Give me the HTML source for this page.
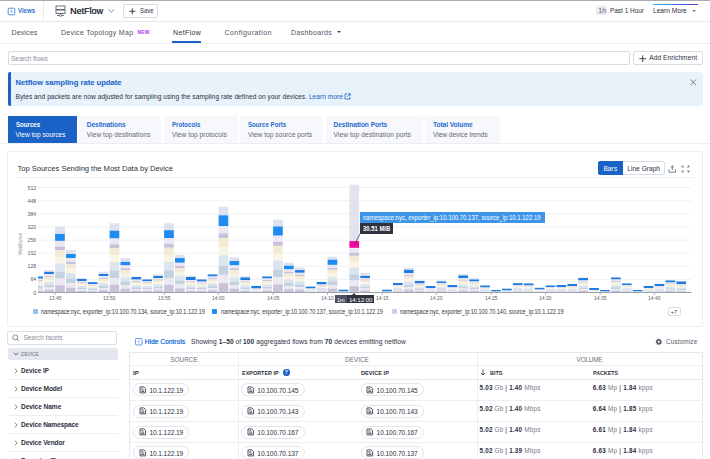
<!DOCTYPE html>
<html><head><meta charset="utf-8">
<style>
*{box-sizing:border-box;margin:0;padding:0}
html,body{width:710px;height:459px;overflow:hidden;background:#fff}
body{position:relative;font-family:"Liberation Sans",sans-serif;color:#2c3140}
.a{position:absolute;white-space:nowrap}
.hl{position:absolute;height:1px}
.vl{position:absolute;width:1px}
.t7{font-size:7px;line-height:9px}
.blue{color:#1a62c6}
.b{font-weight:bold}
.tab{position:absolute;top:116px;height:26.8px;background:#f7f8fb}
.tab .h{position:absolute;left:8px;top:5.2px;font-size:6.6px;font-weight:bold;color:#1f6bd0;white-space:nowrap}
.tab .s{position:absolute;left:8px;top:15.2px;font-size:6.6px;color:#626775;white-space:nowrap}
.pill{position:absolute;height:13px;border:1px solid #e2e5ec;border-radius:7px;background:#fff}
.pill svg{position:absolute;left:4.5px;top:1.5px}
.pill span{position:absolute;left:15px;top:2.4px;font-size:6.6px;line-height:8px;color:#2c3140;white-space:nowrap}
.fac{position:absolute;left:21px;font-size:6.6px;font-weight:bold;color:#2c3140;white-space:nowrap}
.chev{position:absolute;left:13.5px;width:4px;height:6px}
.vol{position:absolute;font-size:6.3px;color:#2c3140;white-space:nowrap}
.vol b{font-weight:bold}
.vol em{font-style:normal;color:#737885}
.ax{position:absolute;font-size:5.6px;color:#5b606d;white-space:nowrap}
</style></head><body>
<!-- top line -->
<div class="hl" style="left:0;top:0;width:710px;height:1px;background:#a9abb1"></div>
<!-- header -->
<svg class="a" style="left:7px;top:6.5px" width="9" height="9"><rect x="1.2" y="1.2" width="6.6" height="6.6" rx="1" fill="none" stroke="#3d82d8" stroke-width="0.9"></rect><path d="M3.7 2.9L5.2 4.5L3.7 6.1" fill="none" stroke="#3d82d8" stroke-width="0.9"></path></svg>
<div class="a t7" style="left: 18px; top: 6px; color: rgb(42, 111, 208); font-weight: bold; transform: scaleX(0.8621); transform-origin: 0px 50%;">Views</div>
<div class="vl" style="left:43px;top:1px;height:20px;background:#e8eaf0"></div>
<!-- server icon -->
<svg class="a" style="left:55px;top:5px" width="12" height="12" viewBox="0 0 12 12"><rect x="1" y="1" width="9" height="3.5" fill="none" stroke="#5a5f6c" stroke-width="0.9"></rect><rect x="1" y="5" width="9" height="3.5" fill="none" stroke="#5a5f6c" stroke-width="0.9"></rect><line x1="5.5" y1="8.5" x2="5.5" y2="10.5" stroke="#5a5f6c" stroke-width="0.9"></line><line x1="2" y1="10.5" x2="9" y2="10.5" stroke="#5a5f6c" stroke-width="0.9"></line><circle cx="5.5" cy="10.5" r="1" fill="#fff" stroke="#5a5f6c" stroke-width="0.8"></circle></svg>
<div class="a" style="left: 70px; top: 5px; font-size: 9.6px; line-height: 12px; color: rgb(44, 49, 64); text-shadow: rgb(44, 49, 64) 0.15px 0px 0px; transform: scaleX(0.9378); transform-origin: 0px 50%;">NetFlow</div>
<svg class="a" style="left:107.8px;top:9.3px" width="7" height="4"><path d="M0.6 0.6L3.3 3.2L6 0.6" fill="none" stroke="#6a6f7c" stroke-width="0.8"></path></svg>
<div class="a" style="left:123.2px;top:4px;width:35px;height:13.5px;border:1px solid #d8dbe5;border-radius:2px"></div>
<svg class="a" style="left:129px;top:7.5px" width="7" height="7"><path d="M3.3 0.3V6.3M0.3 3.3H6.3" stroke="#2c3140" stroke-width="0.9"></path></svg>
<div class="a" style="left: 139.7px; top: 6px; font-size: 6.8px; line-height: 9px; color: rgb(44, 49, 64); transform: scaleX(0.871); transform-origin: 0px 50%;">Save</div>
<div class="a" style="left:596px;top:6px;width:11px;height:9px;background:#e9ebf1;border-radius:2px"></div>
<div class="a t7" style="left:598.3px;top:6px;color:#5d6270">1h</div>
<div class="a t7" style="left: 610px; top: 6.3px; color: rgb(44, 49, 64); transform: scaleX(0.9197); transform-origin: 0px 50%;">Past 1 Hour</div>
<div class="a" style="left:653px;top:3.7px;width:45.2px;height:1.4px;background:linear-gradient(90deg,#33b6e6,#4c3bd6)"></div>
<div class="a t7" style="left: 653.4px; top: 6.4px; color: rgb(44, 49, 64); transform: scaleX(0.9442); transform-origin: 0px 50%;">Learn More</div>
<div class="a" style="left:691.8px;top:9.6px;width:0;height:0;border-left:2px solid transparent;border-right:2px solid transparent;border-top:2.8px solid #7d828e"></div>
<div class="hl" style="left:0;top:21px;width:710px;background:#e8eaf0"></div>
<!-- nav tabs -->
<div class="a t7" style="left: 11.5px; top: 27.5px; color: rgb(76, 82, 96); letter-spacing: 0.132px;">Devices</div>
<div class="a t7" style="left: 60.9px; top: 27.5px; color: rgb(76, 82, 96); letter-spacing: 0.299px;">Device Topology Map</div>
<div class="a" style="left: 137.5px; top: 29px; font-size: 5px; line-height: 6px; font-weight: bold; color: rgb(169, 60, 242); letter-spacing: 0.114px;">NEW</div>
<div class="a t7" style="left: 173px; top: 27.5px; color: rgb(44, 49, 64); letter-spacing: 0.369px;">NetFlow</div>
<div class="a" style="left:172px;top:41px;width:29px;height:1.5px;background:#1a62c6"></div>
<div class="a t7" style="left: 224.5px; top: 27.5px; color: rgb(76, 82, 96); letter-spacing: 0.438px;">Configuration</div>
<div class="a t7" style="left: 291px; top: 27.5px; color: rgb(76, 82, 96); letter-spacing: 0.339px;">Dashboards</div>
<div class="a" style="left:336.8px;top:31px;width:0;height:0;border-left:2.7px solid transparent;border-right:2.7px solid transparent;border-top:2.8px solid #3d4250"></div>
<div class="hl" style="left:0;top:42.5px;width:710px;background:#eceef3"></div>
<!-- search -->
<div class="a" style="left:7.5px;top:51px;width:622px;height:13.5px;border:1px solid #d8dbe8;border-radius:2px"></div>
<div class="a" style="left: 11px; top: 53.5px; font-size: 6.6px; line-height: 9px; color: rgb(141, 145, 156); letter-spacing: -0.086px;">Search flows</div>
<div class="a" style="left:633px;top:51px;width:69.5px;height:13.5px;border:1px solid #d8dbe8;border-radius:2px"></div>
<svg class="a" style="left:638.5px;top:54.5px" width="8" height="8"><path d="M3.7 0.3V7M0.3 3.7H7" stroke="#2c3140" stroke-width="0.9"></path></svg>
<div class="a" style="left: 649.2px; top: 52.8px; font-size: 6.6px; line-height: 9px; color: rgb(44, 49, 64); letter-spacing: 0.068px;">Add Enrichment</div>
<!-- banner -->
<div class="a" style="left:7.5px;top:72px;width:695px;height:34px;background:#e8f2fb;border-left:3px solid #1a62c6;border-radius:2px"></div>
<div class="a b" style="left: 15.5px; top: 77.5px; font-size: 7.7px; line-height: 10px; color: rgb(26, 98, 198); letter-spacing: -0.045px;">Netflow sampling rate update</div>
<div class="a" style="left: 15.5px; top: 92px; font-size: 6.6px; line-height: 9px; color: rgb(44, 49, 64); letter-spacing: 0.047px;">Bytes and packets are now adjusted for sampling using the sampling rate defined on your devices. <span style="color:#1a62c6">Learn more</span></div>
<svg class="a" style="left:344px;top:93.3px" width="7" height="7"><path d="M3.2 1H1V6H6V3.8M4 0.8H6.2V3M6.2 0.8L3.3 3.7" fill="none" stroke="#1a62c6" stroke-width="0.8"></path></svg>
<svg class="a" style="left:689.5px;top:79px" width="7" height="7"><path d="M0.5 0.5L6 6M6 0.5L0.5 6" stroke="#5d6270" stroke-width="0.8"></path></svg>
<!-- tabs -->
<div class="tab" style="left:7.5px;width:69.5px;background:#1a62c6"><div class="h" style="color: rgb(255, 255, 255); transform: scaleX(0.9258); transform-origin: 0px 50%;">Sources</div><div class="s" style="color: rgb(255, 255, 255); letter-spacing: -0.006px;">View top sources</div></div>
<div class="tab" style="left:78.8px;width:82.5px"><div class="h" style="letter-spacing: -0.071px;">Destinations</div><div class="s" style="letter-spacing: 0.06px;">View top destinations</div></div>
<div class="tab" style="left:164px;width:74px"><div class="h" style="transform: scaleX(0.9335); transform-origin: 0px 50%;">Protocols</div><div class="s" style="letter-spacing: 0.055px;">View top protocols</div></div>
<div class="tab" style="left:240px;width:83px"><div class="h" style="transform: scaleX(0.9331); transform-origin: 0px 50%;">Source Ports</div><div class="s" style="letter-spacing: 0.04px;">View top source ports</div></div>
<div class="tab" style="left:325.5px;width:97px"><div class="h" style="letter-spacing: -0.05px;">Destination Ports</div><div class="s" style="letter-spacing: 0.08px;">View top destination ports</div></div>
<div class="tab" style="left:425px;width:74.5px"><div class="h" style="letter-spacing: -0.057px;">Total Volume</div><div class="s" style="letter-spacing: -0.043px;">View device trends</div></div>
<div class="hl" style="left:0;top:143px;width:710px;background:#eceef3"></div>
<!-- chart panel -->
<div class="a" style="left:7px;top:151px;width:695.5px;height:175.5px;border:1px solid #eceef3;border-radius:2px"></div>
<div class="a" style="left: 17.5px; top: 164px; font-size: 7.6px; line-height: 10px; color: rgb(44, 49, 64); letter-spacing: -0.036px;">Top Sources Sending the Most Data by Device</div>
<div class="a" style="left:598px;top:161px;width:67px;height:14px;border:1px solid #d8dbe8;border-radius:2px"></div>
<div class="a" style="left:598px;top:161px;width:24.5px;height:14px;background:#1a62c6;border-radius:2px 0 0 2px"></div>
<div class="a" style="left: 603.4px; top: 163.6px; font-size: 6.6px; line-height: 9px; color: rgb(255, 255, 255); letter-spacing: 0.079px;">Bars</div>
<div class="a" style="left: 627.3px; top: 163.6px; font-size: 6.6px; line-height: 9px; color: rgb(44, 49, 64); letter-spacing: 0.008px;">Line Graph</div>
<svg class="a" style="left:667.5px;top:164.5px" width="9" height="8"><path d="M1 4.5V7.2H7.5V4.5M4.25 0.8V5.2M2.6 2.4L4.25 0.8L5.9 2.4" fill="none" stroke="#5d6270" stroke-width="0.8"></path></svg>
<svg class="a" style="left:681px;top:164.5px" width="9" height="8"><path d="M1 2.5V1H2.5M1 1L2.6 2.6M6.5 1H8V2.5M8 1L6.4 2.6M8 5.5V7H6.5M8 7L6.4 5.4M2.5 7H1V5.5M1 7L2.6 5.4" fill="none" stroke="#5d6270" stroke-width="0.8"></path></svg>
<div class="hl" style="left:17px;top:177px;width:677px;background:#eceef3"></div>
<svg class="a" style="left:0;top:0" width="710" height="459" viewBox="0 0 710 459">
<rect x="38.0" y="278.89" width="653.5" height="1" fill="#f0f1f5"></rect>
<rect x="38.0" y="265.78" width="653.5" height="1" fill="#f0f1f5"></rect>
<rect x="38.0" y="252.67" width="653.5" height="1" fill="#f0f1f5"></rect>
<rect x="38.0" y="239.56" width="653.5" height="1" fill="#f0f1f5"></rect>
<rect x="38.0" y="226.45" width="653.5" height="1" fill="#f0f1f5"></rect>
<rect x="38.0" y="213.34" width="653.5" height="1" fill="#f0f1f5"></rect>
<rect x="38.0" y="200.23" width="653.5" height="1" fill="#f0f1f5"></rect>
<rect x="38.0" y="187.12" width="653.5" height="1" fill="#f0f1f5"></rect>
<rect x="38.00" y="275.40" width="5.00" height="1.20" fill="#dce3ee"></rect>
<rect x="38.00" y="276.60" width="5.00" height="2.10" fill="#1f7ae4"></rect>
<rect x="38.00" y="278.70" width="5.00" height="1.49" fill="#ebe7f3"></rect>
<rect x="38.00" y="280.19" width="5.00" height="0.96" fill="#c7c1da"></rect>
<rect x="38.00" y="281.15" width="5.00" height="1.84" fill="#f3ebd3"></rect>
<rect x="38.00" y="282.99" width="5.00" height="1.71" fill="#f8f5e4"></rect>
<rect x="38.00" y="284.70" width="5.00" height="2.14" fill="#dce4ee"></rect>
<rect x="38.00" y="286.84" width="5.00" height="1.92" fill="#c3d2e0"></rect>
<rect x="38.00" y="288.76" width="5.00" height="1.73" fill="#ece8f2"></rect>
<rect x="38.00" y="290.48" width="5.00" height="1.92" fill="#c9c3d9"></rect>
<rect x="44.20" y="270.00" width="9.70" height="1.90" fill="#dce3ee"></rect>
<rect x="44.20" y="271.90" width="9.70" height="2.30" fill="#1f7ae4"></rect>
<rect x="44.20" y="274.20" width="9.70" height="1.98" fill="#ebe7f3"></rect>
<rect x="44.20" y="276.18" width="9.70" height="1.27" fill="#c7c1da"></rect>
<rect x="44.20" y="277.46" width="9.70" height="2.44" fill="#f3ebd3"></rect>
<rect x="44.20" y="279.90" width="9.70" height="2.27" fill="#f8f5e4"></rect>
<rect x="44.20" y="282.17" width="9.70" height="2.84" fill="#dce4ee"></rect>
<rect x="44.20" y="285.01" width="9.70" height="2.55" fill="#c3d2e0"></rect>
<rect x="44.20" y="287.56" width="9.70" height="2.29" fill="#ece8f2"></rect>
<rect x="44.20" y="289.85" width="9.70" height="2.55" fill="#c9c3d9"></rect>
<rect x="55.10" y="226.60" width="9.70" height="7.30" fill="#dce3ee"></rect>
<rect x="55.10" y="233.90" width="9.70" height="7.00" fill="#1f8af0"></rect>
<rect x="55.10" y="240.90" width="9.70" height="5.61" fill="#ebe7f3"></rect>
<rect x="55.10" y="246.51" width="9.70" height="3.60" fill="#c7c1da"></rect>
<rect x="55.10" y="250.12" width="9.70" height="6.90" fill="#f3ebd3"></rect>
<rect x="55.10" y="257.02" width="9.70" height="6.44" fill="#f8f5e4"></rect>
<rect x="55.10" y="263.46" width="9.70" height="8.03" fill="#dce4ee"></rect>
<rect x="55.10" y="271.49" width="9.70" height="7.21" fill="#c3d2e0"></rect>
<rect x="55.10" y="278.70" width="9.70" height="6.49" fill="#ece8f2"></rect>
<rect x="55.10" y="285.19" width="9.70" height="7.21" fill="#c9c3d9"></rect>
<rect x="66.00" y="250.00" width="9.70" height="4.00" fill="#dce3ee"></rect>
<rect x="66.00" y="254.00" width="9.70" height="4.00" fill="#1f8af0"></rect>
<rect x="66.00" y="258.00" width="9.70" height="3.75" fill="#ebe7f3"></rect>
<rect x="66.00" y="261.75" width="9.70" height="2.41" fill="#c7c1da"></rect>
<rect x="66.00" y="264.16" width="9.70" height="4.61" fill="#f3ebd3"></rect>
<rect x="66.00" y="268.77" width="9.70" height="4.30" fill="#f8f5e4"></rect>
<rect x="66.00" y="273.07" width="9.70" height="5.37" fill="#dce4ee"></rect>
<rect x="66.00" y="278.43" width="9.70" height="4.82" fill="#c3d2e0"></rect>
<rect x="66.00" y="283.25" width="9.70" height="4.33" fill="#ece8f2"></rect>
<rect x="66.00" y="287.58" width="9.70" height="4.82" fill="#c9c3d9"></rect>
<rect x="76.90" y="278.40" width="9.70" height="0.50" fill="#dce3ee"></rect>
<rect x="76.90" y="278.90" width="9.70" height="2.10" fill="#1f7ae4"></rect>
<rect x="76.90" y="281.00" width="9.70" height="1.24" fill="#ebe7f3"></rect>
<rect x="76.90" y="282.24" width="9.70" height="0.80" fill="#c7c1da"></rect>
<rect x="76.90" y="283.04" width="9.70" height="1.53" fill="#f3ebd3"></rect>
<rect x="76.90" y="284.57" width="9.70" height="1.43" fill="#f8f5e4"></rect>
<rect x="76.90" y="285.99" width="9.70" height="1.78" fill="#dce4ee"></rect>
<rect x="76.90" y="287.77" width="9.70" height="1.60" fill="#c3d2e0"></rect>
<rect x="76.90" y="289.37" width="9.70" height="1.44" fill="#ece8f2"></rect>
<rect x="76.90" y="290.80" width="9.70" height="1.60" fill="#c9c3d9"></rect>
<rect x="87.80" y="281.80" width="9.70" height="0.40" fill="#dce3ee"></rect>
<rect x="87.80" y="282.20" width="9.70" height="1.90" fill="#1f7ae4"></rect>
<rect x="87.80" y="284.10" width="9.70" height="0.90" fill="#ebe7f3"></rect>
<rect x="87.80" y="285.00" width="9.70" height="0.58" fill="#c7c1da"></rect>
<rect x="87.80" y="285.59" width="9.70" height="1.11" fill="#f3ebd3"></rect>
<rect x="87.80" y="286.70" width="9.70" height="1.04" fill="#f8f5e4"></rect>
<rect x="87.80" y="287.74" width="9.70" height="1.29" fill="#dce4ee"></rect>
<rect x="87.80" y="289.03" width="9.70" height="1.16" fill="#c3d2e0"></rect>
<rect x="87.80" y="290.19" width="9.70" height="1.05" fill="#ece8f2"></rect>
<rect x="87.80" y="291.24" width="9.70" height="1.16" fill="#c9c3d9"></rect>
<rect x="98.70" y="271.70" width="9.70" height="2.30" fill="#dce3ee"></rect>
<rect x="98.70" y="274.00" width="9.70" height="2.00" fill="#1f7ae4"></rect>
<rect x="98.70" y="276.00" width="9.70" height="1.79" fill="#ebe7f3"></rect>
<rect x="98.70" y="277.79" width="9.70" height="1.15" fill="#c7c1da"></rect>
<rect x="98.70" y="278.94" width="9.70" height="2.20" fill="#f3ebd3"></rect>
<rect x="98.70" y="281.13" width="9.70" height="2.05" fill="#f8f5e4"></rect>
<rect x="98.70" y="283.18" width="9.70" height="2.56" fill="#dce4ee"></rect>
<rect x="98.70" y="285.74" width="9.70" height="2.30" fill="#c3d2e0"></rect>
<rect x="98.70" y="288.04" width="9.70" height="2.07" fill="#ece8f2"></rect>
<rect x="98.70" y="290.10" width="9.70" height="2.30" fill="#c9c3d9"></rect>
<rect x="109.60" y="223.30" width="9.70" height="7.40" fill="#dce3ee"></rect>
<rect x="109.60" y="230.70" width="9.70" height="7.80" fill="#1f8af0"></rect>
<rect x="109.60" y="238.50" width="9.70" height="5.88" fill="#ebe7f3"></rect>
<rect x="109.60" y="244.38" width="9.70" height="3.77" fill="#c7c1da"></rect>
<rect x="109.60" y="248.15" width="9.70" height="7.22" fill="#f3ebd3"></rect>
<rect x="109.60" y="255.37" width="9.70" height="6.74" fill="#f8f5e4"></rect>
<rect x="109.60" y="262.11" width="9.70" height="8.41" fill="#dce4ee"></rect>
<rect x="109.60" y="270.52" width="9.70" height="7.55" fill="#c3d2e0"></rect>
<rect x="109.60" y="278.06" width="9.70" height="6.79" fill="#ece8f2"></rect>
<rect x="109.60" y="284.85" width="9.70" height="7.55" fill="#c9c3d9"></rect>
<rect x="120.50" y="258.10" width="9.70" height="3.80" fill="#dce3ee"></rect>
<rect x="120.50" y="261.90" width="9.70" height="3.50" fill="#1f8af0"></rect>
<rect x="120.50" y="265.40" width="9.70" height="2.94" fill="#ebe7f3"></rect>
<rect x="120.50" y="268.34" width="9.70" height="1.89" fill="#c7c1da"></rect>
<rect x="120.50" y="270.23" width="9.70" height="3.62" fill="#f3ebd3"></rect>
<rect x="120.50" y="273.85" width="9.70" height="3.38" fill="#f8f5e4"></rect>
<rect x="120.50" y="277.23" width="9.70" height="4.21" fill="#dce4ee"></rect>
<rect x="120.50" y="281.44" width="9.70" height="3.78" fill="#c3d2e0"></rect>
<rect x="120.50" y="285.22" width="9.70" height="3.40" fill="#ece8f2"></rect>
<rect x="120.50" y="288.62" width="9.70" height="3.78" fill="#c9c3d9"></rect>
<rect x="131.40" y="276.70" width="9.70" height="0.30" fill="#dce3ee"></rect>
<rect x="131.40" y="277.00" width="9.70" height="2.60" fill="#1f7ae4"></rect>
<rect x="131.40" y="279.60" width="9.70" height="1.40" fill="#ebe7f3"></rect>
<rect x="131.40" y="281.00" width="9.70" height="0.90" fill="#c7c1da"></rect>
<rect x="131.40" y="281.89" width="9.70" height="1.72" fill="#f3ebd3"></rect>
<rect x="131.40" y="283.61" width="9.70" height="1.60" fill="#f8f5e4"></rect>
<rect x="131.40" y="285.21" width="9.70" height="2.00" fill="#dce4ee"></rect>
<rect x="131.40" y="287.20" width="9.70" height="1.79" fill="#c3d2e0"></rect>
<rect x="131.40" y="289.00" width="9.70" height="1.61" fill="#ece8f2"></rect>
<rect x="131.40" y="290.61" width="9.70" height="1.79" fill="#c9c3d9"></rect>
<rect x="142.30" y="278.90" width="9.70" height="0.60" fill="#dce3ee"></rect>
<rect x="142.30" y="279.50" width="9.70" height="1.80" fill="#1f7ae4"></rect>
<rect x="142.30" y="281.30" width="9.70" height="1.21" fill="#ebe7f3"></rect>
<rect x="142.30" y="282.51" width="9.70" height="0.78" fill="#c7c1da"></rect>
<rect x="142.30" y="283.29" width="9.70" height="1.49" fill="#f3ebd3"></rect>
<rect x="142.30" y="284.77" width="9.70" height="1.39" fill="#f8f5e4"></rect>
<rect x="142.30" y="286.16" width="9.70" height="1.73" fill="#dce4ee"></rect>
<rect x="142.30" y="287.89" width="9.70" height="1.55" fill="#c3d2e0"></rect>
<rect x="142.30" y="289.45" width="9.70" height="1.40" fill="#ece8f2"></rect>
<rect x="142.30" y="290.85" width="9.70" height="1.55" fill="#c9c3d9"></rect>
<rect x="153.20" y="274.30" width="9.70" height="1.70" fill="#dce3ee"></rect>
<rect x="153.20" y="276.00" width="9.70" height="2.00" fill="#1f7ae4"></rect>
<rect x="153.20" y="278.00" width="9.70" height="1.57" fill="#ebe7f3"></rect>
<rect x="153.20" y="279.57" width="9.70" height="1.01" fill="#c7c1da"></rect>
<rect x="153.20" y="280.58" width="9.70" height="1.93" fill="#f3ebd3"></rect>
<rect x="153.20" y="282.51" width="9.70" height="1.80" fill="#f8f5e4"></rect>
<rect x="153.20" y="284.31" width="9.70" height="2.25" fill="#dce4ee"></rect>
<rect x="153.20" y="286.55" width="9.70" height="2.02" fill="#c3d2e0"></rect>
<rect x="153.20" y="288.57" width="9.70" height="1.81" fill="#ece8f2"></rect>
<rect x="153.20" y="290.38" width="9.70" height="2.02" fill="#c9c3d9"></rect>
<rect x="164.10" y="223.30" width="9.70" height="6.90" fill="#dce3ee"></rect>
<rect x="164.10" y="230.20" width="9.70" height="7.80" fill="#1f8af0"></rect>
<rect x="164.10" y="238.00" width="9.70" height="5.93" fill="#ebe7f3"></rect>
<rect x="164.10" y="243.93" width="9.70" height="3.81" fill="#c7c1da"></rect>
<rect x="164.10" y="247.74" width="9.70" height="7.29" fill="#f3ebd3"></rect>
<rect x="164.10" y="255.03" width="9.70" height="6.80" fill="#f8f5e4"></rect>
<rect x="164.10" y="261.83" width="9.70" height="8.49" fill="#dce4ee"></rect>
<rect x="164.10" y="270.31" width="9.70" height="7.62" fill="#c3d2e0"></rect>
<rect x="164.10" y="277.93" width="9.70" height="6.85" fill="#ece8f2"></rect>
<rect x="164.10" y="284.78" width="9.70" height="7.62" fill="#c9c3d9"></rect>
<rect x="175.00" y="254.80" width="9.70" height="3.30" fill="#dce3ee"></rect>
<rect x="175.00" y="258.10" width="9.70" height="4.70" fill="#1f8af0"></rect>
<rect x="175.00" y="262.80" width="9.70" height="3.23" fill="#ebe7f3"></rect>
<rect x="175.00" y="266.03" width="9.70" height="2.07" fill="#c7c1da"></rect>
<rect x="175.00" y="268.10" width="9.70" height="3.97" fill="#f3ebd3"></rect>
<rect x="175.00" y="272.06" width="9.70" height="3.70" fill="#f8f5e4"></rect>
<rect x="175.00" y="275.76" width="9.70" height="4.62" fill="#dce4ee"></rect>
<rect x="175.00" y="280.38" width="9.70" height="4.14" fill="#c3d2e0"></rect>
<rect x="175.00" y="284.53" width="9.70" height="3.73" fill="#ece8f2"></rect>
<rect x="175.00" y="288.26" width="9.70" height="4.14" fill="#c9c3d9"></rect>
<rect x="185.90" y="275.70" width="9.70" height="1.30" fill="#dce3ee"></rect>
<rect x="185.90" y="277.00" width="9.70" height="3.00" fill="#1f7ae4"></rect>
<rect x="185.90" y="280.00" width="9.70" height="1.35" fill="#ebe7f3"></rect>
<rect x="185.90" y="281.35" width="9.70" height="0.87" fill="#c7c1da"></rect>
<rect x="185.90" y="282.22" width="9.70" height="1.66" fill="#f3ebd3"></rect>
<rect x="185.90" y="283.88" width="9.70" height="1.55" fill="#f8f5e4"></rect>
<rect x="185.90" y="285.43" width="9.70" height="1.93" fill="#dce4ee"></rect>
<rect x="185.90" y="287.37" width="9.70" height="1.74" fill="#c3d2e0"></rect>
<rect x="185.90" y="289.10" width="9.70" height="1.56" fill="#ece8f2"></rect>
<rect x="185.90" y="290.66" width="9.70" height="1.74" fill="#c9c3d9"></rect>
<rect x="196.80" y="279.40" width="9.70" height="0.10" fill="#dce3ee"></rect>
<rect x="196.80" y="279.50" width="9.70" height="2.10" fill="#1f7ae4"></rect>
<rect x="196.80" y="281.60" width="9.70" height="1.18" fill="#ebe7f3"></rect>
<rect x="196.80" y="282.78" width="9.70" height="0.76" fill="#c7c1da"></rect>
<rect x="196.80" y="283.53" width="9.70" height="1.45" fill="#f3ebd3"></rect>
<rect x="196.80" y="284.98" width="9.70" height="1.35" fill="#f8f5e4"></rect>
<rect x="196.80" y="286.33" width="9.70" height="1.68" fill="#dce4ee"></rect>
<rect x="196.80" y="288.02" width="9.70" height="1.51" fill="#c3d2e0"></rect>
<rect x="196.80" y="289.53" width="9.70" height="1.36" fill="#ece8f2"></rect>
<rect x="196.80" y="290.89" width="9.70" height="1.51" fill="#c9c3d9"></rect>
<rect x="207.70" y="273.90" width="9.70" height="0.60" fill="#dce3ee"></rect>
<rect x="207.70" y="274.50" width="9.70" height="2.00" fill="#1f7ae4"></rect>
<rect x="207.70" y="276.50" width="9.70" height="1.73" fill="#ebe7f3"></rect>
<rect x="207.70" y="278.23" width="9.70" height="1.11" fill="#c7c1da"></rect>
<rect x="207.70" y="279.35" width="9.70" height="2.13" fill="#f3ebd3"></rect>
<rect x="207.70" y="281.48" width="9.70" height="1.99" fill="#f8f5e4"></rect>
<rect x="207.70" y="283.46" width="9.70" height="2.48" fill="#dce4ee"></rect>
<rect x="207.70" y="285.94" width="9.70" height="2.23" fill="#c3d2e0"></rect>
<rect x="207.70" y="288.17" width="9.70" height="2.00" fill="#ece8f2"></rect>
<rect x="207.70" y="290.17" width="9.70" height="2.23" fill="#c9c3d9"></rect>
<rect x="218.60" y="206.70" width="9.70" height="8.60" fill="#dce3ee"></rect>
<rect x="218.60" y="215.30" width="9.70" height="10.90" fill="#1f8af0"></rect>
<rect x="218.60" y="226.20" width="9.70" height="7.22" fill="#ebe7f3"></rect>
<rect x="218.60" y="233.42" width="9.70" height="4.63" fill="#c7c1da"></rect>
<rect x="218.60" y="238.05" width="9.70" height="8.87" fill="#f3ebd3"></rect>
<rect x="218.60" y="246.92" width="9.70" height="8.28" fill="#f8f5e4"></rect>
<rect x="218.60" y="255.20" width="9.70" height="10.33" fill="#dce4ee"></rect>
<rect x="218.60" y="265.52" width="9.70" height="9.27" fill="#c3d2e0"></rect>
<rect x="218.60" y="274.79" width="9.70" height="8.34" fill="#ece8f2"></rect>
<rect x="218.60" y="283.13" width="9.70" height="9.27" fill="#c9c3d9"></rect>
<rect x="229.50" y="257.60" width="9.70" height="3.40" fill="#dce3ee"></rect>
<rect x="229.50" y="261.00" width="9.70" height="4.40" fill="#1f8af0"></rect>
<rect x="229.50" y="265.40" width="9.70" height="2.94" fill="#ebe7f3"></rect>
<rect x="229.50" y="268.34" width="9.70" height="1.89" fill="#c7c1da"></rect>
<rect x="229.50" y="270.23" width="9.70" height="3.62" fill="#f3ebd3"></rect>
<rect x="229.50" y="273.85" width="9.70" height="3.38" fill="#f8f5e4"></rect>
<rect x="229.50" y="277.23" width="9.70" height="4.21" fill="#dce4ee"></rect>
<rect x="229.50" y="281.44" width="9.70" height="3.78" fill="#c3d2e0"></rect>
<rect x="229.50" y="285.22" width="9.70" height="3.40" fill="#ece8f2"></rect>
<rect x="229.50" y="288.62" width="9.70" height="3.78" fill="#c9c3d9"></rect>
<rect x="240.40" y="276.20" width="9.70" height="1.30" fill="#dce3ee"></rect>
<rect x="240.40" y="277.50" width="9.70" height="2.50" fill="#1f7ae4"></rect>
<rect x="240.40" y="280.00" width="9.70" height="1.35" fill="#ebe7f3"></rect>
<rect x="240.40" y="281.35" width="9.70" height="0.87" fill="#c7c1da"></rect>
<rect x="240.40" y="282.22" width="9.70" height="1.66" fill="#f3ebd3"></rect>
<rect x="240.40" y="283.88" width="9.70" height="1.55" fill="#f8f5e4"></rect>
<rect x="240.40" y="285.43" width="9.70" height="1.93" fill="#dce4ee"></rect>
<rect x="240.40" y="287.37" width="9.70" height="1.74" fill="#c3d2e0"></rect>
<rect x="240.40" y="289.10" width="9.70" height="1.56" fill="#ece8f2"></rect>
<rect x="240.40" y="290.66" width="9.70" height="1.74" fill="#c9c3d9"></rect>
<rect x="251.30" y="285.80" width="9.70" height="0.20" fill="#dce3ee"></rect>
<rect x="251.30" y="286.00" width="9.70" height="2.50" fill="#1f7ae4"></rect>
<rect x="251.30" y="288.50" width="9.70" height="0.43" fill="#ebe7f3"></rect>
<rect x="251.30" y="288.93" width="9.70" height="0.27" fill="#c7c1da"></rect>
<rect x="251.30" y="289.20" width="9.70" height="0.52" fill="#f3ebd3"></rect>
<rect x="251.30" y="289.72" width="9.70" height="0.49" fill="#f8f5e4"></rect>
<rect x="251.30" y="290.21" width="9.70" height="0.61" fill="#dce4ee"></rect>
<rect x="251.30" y="290.82" width="9.70" height="0.55" fill="#c3d2e0"></rect>
<rect x="251.30" y="291.36" width="9.70" height="0.49" fill="#ece8f2"></rect>
<rect x="251.30" y="291.85" width="9.70" height="0.55" fill="#c9c3d9"></rect>
<rect x="262.20" y="276.20" width="9.70" height="0.30" fill="#dce3ee"></rect>
<rect x="262.20" y="276.50" width="9.70" height="2.00" fill="#1f7ae4"></rect>
<rect x="262.20" y="278.50" width="9.70" height="1.52" fill="#ebe7f3"></rect>
<rect x="262.20" y="280.02" width="9.70" height="0.97" fill="#c7c1da"></rect>
<rect x="262.20" y="280.99" width="9.70" height="1.86" fill="#f3ebd3"></rect>
<rect x="262.20" y="282.85" width="9.70" height="1.74" fill="#f8f5e4"></rect>
<rect x="262.20" y="284.59" width="9.70" height="2.17" fill="#dce4ee"></rect>
<rect x="262.20" y="286.76" width="9.70" height="1.95" fill="#c3d2e0"></rect>
<rect x="262.20" y="288.70" width="9.70" height="1.75" fill="#ece8f2"></rect>
<rect x="262.20" y="290.45" width="9.70" height="1.95" fill="#c9c3d9"></rect>
<rect x="273.10" y="219.70" width="9.70" height="6.80" fill="#dce3ee"></rect>
<rect x="273.10" y="226.50" width="9.70" height="9.20" fill="#1f8af0"></rect>
<rect x="273.10" y="235.70" width="9.70" height="6.18" fill="#ebe7f3"></rect>
<rect x="273.10" y="241.88" width="9.70" height="3.97" fill="#c7c1da"></rect>
<rect x="273.10" y="245.85" width="9.70" height="7.60" fill="#f3ebd3"></rect>
<rect x="273.10" y="253.45" width="9.70" height="7.09" fill="#f8f5e4"></rect>
<rect x="273.10" y="260.53" width="9.70" height="8.85" fill="#dce4ee"></rect>
<rect x="273.10" y="269.38" width="9.70" height="7.94" fill="#c3d2e0"></rect>
<rect x="273.10" y="277.32" width="9.70" height="7.14" fill="#ece8f2"></rect>
<rect x="273.10" y="284.46" width="9.70" height="7.94" fill="#c9c3d9"></rect>
<rect x="284.00" y="262.80" width="9.70" height="2.90" fill="#dce3ee"></rect>
<rect x="284.00" y="265.70" width="9.70" height="3.70" fill="#1f8af0"></rect>
<rect x="284.00" y="269.40" width="9.70" height="2.51" fill="#ebe7f3"></rect>
<rect x="284.00" y="271.91" width="9.70" height="1.61" fill="#c7c1da"></rect>
<rect x="284.00" y="273.52" width="9.70" height="3.08" fill="#f3ebd3"></rect>
<rect x="284.00" y="276.60" width="9.70" height="2.88" fill="#f8f5e4"></rect>
<rect x="284.00" y="279.47" width="9.70" height="3.59" fill="#dce4ee"></rect>
<rect x="284.00" y="283.06" width="9.70" height="3.22" fill="#c3d2e0"></rect>
<rect x="284.00" y="286.28" width="9.70" height="2.90" fill="#ece8f2"></rect>
<rect x="284.00" y="289.18" width="9.70" height="3.22" fill="#c9c3d9"></rect>
<rect x="294.90" y="267.50" width="9.70" height="2.60" fill="#dce3ee"></rect>
<rect x="294.90" y="270.10" width="9.70" height="2.70" fill="#1f7ae4"></rect>
<rect x="294.90" y="272.80" width="9.70" height="2.14" fill="#ebe7f3"></rect>
<rect x="294.90" y="274.94" width="9.70" height="1.37" fill="#c7c1da"></rect>
<rect x="294.90" y="276.31" width="9.70" height="2.63" fill="#f3ebd3"></rect>
<rect x="294.90" y="278.93" width="9.70" height="2.45" fill="#f8f5e4"></rect>
<rect x="294.90" y="281.38" width="9.70" height="3.06" fill="#dce4ee"></rect>
<rect x="294.90" y="284.44" width="9.70" height="2.74" fill="#c3d2e0"></rect>
<rect x="294.90" y="287.19" width="9.70" height="2.47" fill="#ece8f2"></rect>
<rect x="294.90" y="289.66" width="9.70" height="2.74" fill="#c9c3d9"></rect>
<rect x="305.80" y="286.60" width="9.70" height="1.90" fill="#1f7ae4"></rect>
<rect x="305.80" y="288.50" width="9.70" height="0.43" fill="#ebe7f3"></rect>
<rect x="305.80" y="288.93" width="9.70" height="0.27" fill="#c7c1da"></rect>
<rect x="305.80" y="289.20" width="9.70" height="0.52" fill="#f3ebd3"></rect>
<rect x="305.80" y="289.72" width="9.70" height="0.49" fill="#f8f5e4"></rect>
<rect x="305.80" y="290.21" width="9.70" height="0.61" fill="#dce4ee"></rect>
<rect x="305.80" y="290.82" width="9.70" height="0.55" fill="#c3d2e0"></rect>
<rect x="305.80" y="291.36" width="9.70" height="0.49" fill="#ece8f2"></rect>
<rect x="305.80" y="291.85" width="9.70" height="0.55" fill="#c9c3d9"></rect>
<rect x="316.70" y="281.90" width="9.70" height="0.10" fill="#dce3ee"></rect>
<rect x="316.70" y="282.00" width="9.70" height="2.50" fill="#1f7ae4"></rect>
<rect x="316.70" y="284.50" width="9.70" height="0.86" fill="#ebe7f3"></rect>
<rect x="316.70" y="285.36" width="9.70" height="0.55" fill="#c7c1da"></rect>
<rect x="316.70" y="285.91" width="9.70" height="1.06" fill="#f3ebd3"></rect>
<rect x="316.70" y="286.97" width="9.70" height="0.99" fill="#f8f5e4"></rect>
<rect x="316.70" y="287.96" width="9.70" height="1.23" fill="#dce4ee"></rect>
<rect x="316.70" y="289.19" width="9.70" height="1.11" fill="#c3d2e0"></rect>
<rect x="316.70" y="290.30" width="9.70" height="1.00" fill="#ece8f2"></rect>
<rect x="316.70" y="291.29" width="9.70" height="1.11" fill="#c9c3d9"></rect>
<rect x="327.60" y="256.60" width="9.70" height="3.10" fill="#dce3ee"></rect>
<rect x="327.60" y="259.70" width="9.70" height="5.20" fill="#1f8af0"></rect>
<rect x="327.60" y="264.90" width="9.70" height="3.00" fill="#ebe7f3"></rect>
<rect x="327.60" y="267.90" width="9.70" height="1.93" fill="#c7c1da"></rect>
<rect x="327.60" y="269.82" width="9.70" height="3.69" fill="#f3ebd3"></rect>
<rect x="327.60" y="273.51" width="9.70" height="3.44" fill="#f8f5e4"></rect>
<rect x="327.60" y="276.94" width="9.70" height="4.29" fill="#dce4ee"></rect>
<rect x="327.60" y="281.24" width="9.70" height="3.85" fill="#c3d2e0"></rect>
<rect x="327.60" y="285.09" width="9.70" height="3.46" fill="#ece8f2"></rect>
<rect x="327.60" y="288.55" width="9.70" height="3.85" fill="#c9c3d9"></rect>
<rect x="338.50" y="289.70" width="9.70" height="1.80" fill="#1f7ae4"></rect>
<rect x="338.50" y="291.50" width="9.70" height="0.10" fill="#ebe7f3"></rect>
<rect x="338.50" y="291.60" width="9.70" height="0.06" fill="#c7c1da"></rect>
<rect x="338.50" y="291.66" width="9.70" height="0.12" fill="#f3ebd3"></rect>
<rect x="338.50" y="291.78" width="9.70" height="0.11" fill="#f8f5e4"></rect>
<rect x="338.50" y="291.89" width="9.70" height="0.14" fill="#dce4ee"></rect>
<rect x="338.50" y="292.03" width="9.70" height="0.13" fill="#c3d2e0"></rect>
<rect x="338.50" y="292.16" width="9.70" height="0.11" fill="#ece8f2"></rect>
<rect x="338.50" y="292.27" width="9.70" height="0.13" fill="#c9c3d9"></rect>
<rect x="360.30" y="272.80" width="9.70" height="3.10" fill="#dce3ee"></rect>
<rect x="360.30" y="275.90" width="9.70" height="2.10" fill="#1f7ae4"></rect>
<rect x="360.30" y="278.00" width="9.70" height="1.57" fill="#ebe7f3"></rect>
<rect x="360.30" y="279.57" width="9.70" height="1.01" fill="#c7c1da"></rect>
<rect x="360.30" y="280.58" width="9.70" height="1.93" fill="#f3ebd3"></rect>
<rect x="360.30" y="282.51" width="9.70" height="1.80" fill="#f8f5e4"></rect>
<rect x="360.30" y="284.31" width="9.70" height="2.25" fill="#dce4ee"></rect>
<rect x="360.30" y="286.55" width="9.70" height="2.02" fill="#c3d2e0"></rect>
<rect x="360.30" y="288.57" width="9.70" height="1.81" fill="#ece8f2"></rect>
<rect x="360.30" y="290.38" width="9.70" height="2.02" fill="#c9c3d9"></rect>
<rect x="382.10" y="289.70" width="9.70" height="1.80" fill="#1f7ae4"></rect>
<rect x="382.10" y="291.50" width="9.70" height="0.10" fill="#ebe7f3"></rect>
<rect x="382.10" y="291.60" width="9.70" height="0.06" fill="#c7c1da"></rect>
<rect x="382.10" y="291.66" width="9.70" height="0.12" fill="#f3ebd3"></rect>
<rect x="382.10" y="291.78" width="9.70" height="0.11" fill="#f8f5e4"></rect>
<rect x="382.10" y="291.89" width="9.70" height="0.14" fill="#dce4ee"></rect>
<rect x="382.10" y="292.03" width="9.70" height="0.13" fill="#c3d2e0"></rect>
<rect x="382.10" y="292.16" width="9.70" height="0.11" fill="#ece8f2"></rect>
<rect x="382.10" y="292.27" width="9.70" height="0.13" fill="#c9c3d9"></rect>
<rect x="393.00" y="282.70" width="9.70" height="0.30" fill="#dce3ee"></rect>
<rect x="393.00" y="283.00" width="9.70" height="2.00" fill="#1f7ae4"></rect>
<rect x="393.00" y="285.00" width="9.70" height="0.81" fill="#ebe7f3"></rect>
<rect x="393.00" y="285.81" width="9.70" height="0.52" fill="#c7c1da"></rect>
<rect x="393.00" y="286.32" width="9.70" height="0.99" fill="#f3ebd3"></rect>
<rect x="393.00" y="287.32" width="9.70" height="0.93" fill="#f8f5e4"></rect>
<rect x="393.00" y="288.24" width="9.70" height="1.15" fill="#dce4ee"></rect>
<rect x="393.00" y="289.40" width="9.70" height="1.04" fill="#c3d2e0"></rect>
<rect x="393.00" y="290.43" width="9.70" height="0.93" fill="#ece8f2"></rect>
<rect x="393.00" y="291.36" width="9.70" height="1.04" fill="#c9c3d9"></rect>
<rect x="403.90" y="268.00" width="9.70" height="1.80" fill="#dce3ee"></rect>
<rect x="403.90" y="269.80" width="9.70" height="3.20" fill="#1f7ae4"></rect>
<rect x="403.90" y="273.00" width="9.70" height="2.11" fill="#ebe7f3"></rect>
<rect x="403.90" y="275.11" width="9.70" height="1.36" fill="#c7c1da"></rect>
<rect x="403.90" y="276.47" width="9.70" height="2.60" fill="#f3ebd3"></rect>
<rect x="403.90" y="279.07" width="9.70" height="2.43" fill="#f8f5e4"></rect>
<rect x="403.90" y="281.50" width="9.70" height="3.03" fill="#dce4ee"></rect>
<rect x="403.90" y="284.52" width="9.70" height="2.72" fill="#c3d2e0"></rect>
<rect x="403.90" y="287.24" width="9.70" height="2.44" fill="#ece8f2"></rect>
<rect x="403.90" y="289.68" width="9.70" height="2.72" fill="#c9c3d9"></rect>
<rect x="414.80" y="280.40" width="9.70" height="0.60" fill="#dce3ee"></rect>
<rect x="414.80" y="281.00" width="9.70" height="2.50" fill="#1f7ae4"></rect>
<rect x="414.80" y="283.50" width="9.70" height="0.97" fill="#ebe7f3"></rect>
<rect x="414.80" y="284.47" width="9.70" height="0.62" fill="#c7c1da"></rect>
<rect x="414.80" y="285.09" width="9.70" height="1.19" fill="#f3ebd3"></rect>
<rect x="414.80" y="286.29" width="9.70" height="1.11" fill="#f8f5e4"></rect>
<rect x="414.80" y="287.40" width="9.70" height="1.39" fill="#dce4ee"></rect>
<rect x="414.80" y="288.79" width="9.70" height="1.25" fill="#c3d2e0"></rect>
<rect x="414.80" y="290.03" width="9.70" height="1.12" fill="#ece8f2"></rect>
<rect x="414.80" y="291.15" width="9.70" height="1.25" fill="#c9c3d9"></rect>
<rect x="425.70" y="286.00" width="9.70" height="2.00" fill="#1f7ae4"></rect>
<rect x="425.70" y="288.00" width="9.70" height="0.48" fill="#ebe7f3"></rect>
<rect x="425.70" y="288.48" width="9.70" height="0.31" fill="#c7c1da"></rect>
<rect x="425.70" y="288.79" width="9.70" height="0.59" fill="#f3ebd3"></rect>
<rect x="425.70" y="289.38" width="9.70" height="0.55" fill="#f8f5e4"></rect>
<rect x="425.70" y="289.93" width="9.70" height="0.69" fill="#dce4ee"></rect>
<rect x="425.70" y="290.61" width="9.70" height="0.62" fill="#c3d2e0"></rect>
<rect x="425.70" y="291.23" width="9.70" height="0.55" fill="#ece8f2"></rect>
<rect x="425.70" y="291.78" width="9.70" height="0.62" fill="#c9c3d9"></rect>
<rect x="436.60" y="280.40" width="9.70" height="1.10" fill="#dce3ee"></rect>
<rect x="436.60" y="281.50" width="9.70" height="1.50" fill="#1f7ae4"></rect>
<rect x="436.60" y="283.00" width="9.70" height="1.02" fill="#ebe7f3"></rect>
<rect x="436.60" y="284.02" width="9.70" height="0.66" fill="#c7c1da"></rect>
<rect x="436.60" y="284.68" width="9.70" height="1.26" fill="#f3ebd3"></rect>
<rect x="436.60" y="285.94" width="9.70" height="1.18" fill="#f8f5e4"></rect>
<rect x="436.60" y="287.12" width="9.70" height="1.47" fill="#dce4ee"></rect>
<rect x="436.60" y="288.58" width="9.70" height="1.32" fill="#c3d2e0"></rect>
<rect x="436.60" y="289.90" width="9.70" height="1.18" fill="#ece8f2"></rect>
<rect x="436.60" y="291.08" width="9.70" height="1.32" fill="#c9c3d9"></rect>
<rect x="447.50" y="285.00" width="9.70" height="2.30" fill="#1f7ae4"></rect>
<rect x="447.50" y="287.30" width="9.70" height="0.56" fill="#ebe7f3"></rect>
<rect x="447.50" y="287.86" width="9.70" height="0.36" fill="#c7c1da"></rect>
<rect x="447.50" y="288.21" width="9.70" height="0.68" fill="#f3ebd3"></rect>
<rect x="447.50" y="288.90" width="9.70" height="0.64" fill="#f8f5e4"></rect>
<rect x="447.50" y="289.53" width="9.70" height="0.80" fill="#dce4ee"></rect>
<rect x="447.50" y="290.33" width="9.70" height="0.71" fill="#c3d2e0"></rect>
<rect x="447.50" y="291.04" width="9.70" height="0.64" fill="#ece8f2"></rect>
<rect x="447.50" y="291.69" width="9.70" height="0.71" fill="#c9c3d9"></rect>
<rect x="458.40" y="274.10" width="9.70" height="1.40" fill="#dce3ee"></rect>
<rect x="458.40" y="275.50" width="9.70" height="2.70" fill="#1f7ae4"></rect>
<rect x="458.40" y="278.20" width="9.70" height="1.55" fill="#ebe7f3"></rect>
<rect x="458.40" y="279.75" width="9.70" height="0.99" fill="#c7c1da"></rect>
<rect x="458.40" y="280.74" width="9.70" height="1.90" fill="#f3ebd3"></rect>
<rect x="458.40" y="282.64" width="9.70" height="1.77" fill="#f8f5e4"></rect>
<rect x="458.40" y="284.42" width="9.70" height="2.22" fill="#dce4ee"></rect>
<rect x="458.40" y="286.63" width="9.70" height="1.99" fill="#c3d2e0"></rect>
<rect x="458.40" y="288.62" width="9.70" height="1.79" fill="#ece8f2"></rect>
<rect x="458.40" y="290.41" width="9.70" height="1.99" fill="#c9c3d9"></rect>
<rect x="469.30" y="278.20" width="9.70" height="1.30" fill="#dce3ee"></rect>
<rect x="469.30" y="279.50" width="9.70" height="2.00" fill="#1f7ae4"></rect>
<rect x="469.30" y="281.50" width="9.70" height="1.19" fill="#ebe7f3"></rect>
<rect x="469.30" y="282.69" width="9.70" height="0.76" fill="#c7c1da"></rect>
<rect x="469.30" y="283.45" width="9.70" height="1.46" fill="#f3ebd3"></rect>
<rect x="469.30" y="284.91" width="9.70" height="1.36" fill="#f8f5e4"></rect>
<rect x="469.30" y="286.27" width="9.70" height="1.70" fill="#dce4ee"></rect>
<rect x="469.30" y="287.97" width="9.70" height="1.53" fill="#c3d2e0"></rect>
<rect x="469.30" y="289.50" width="9.70" height="1.37" fill="#ece8f2"></rect>
<rect x="469.30" y="290.87" width="9.70" height="1.53" fill="#c9c3d9"></rect>
<rect x="480.20" y="285.40" width="9.70" height="0.10" fill="#dce3ee"></rect>
<rect x="480.20" y="285.50" width="9.70" height="2.00" fill="#1f7ae4"></rect>
<rect x="480.20" y="287.50" width="9.70" height="0.53" fill="#ebe7f3"></rect>
<rect x="480.20" y="288.03" width="9.70" height="0.34" fill="#c7c1da"></rect>
<rect x="480.20" y="288.38" width="9.70" height="0.66" fill="#f3ebd3"></rect>
<rect x="480.20" y="289.03" width="9.70" height="0.61" fill="#f8f5e4"></rect>
<rect x="480.20" y="289.65" width="9.70" height="0.76" fill="#dce4ee"></rect>
<rect x="480.20" y="290.41" width="9.70" height="0.69" fill="#c3d2e0"></rect>
<rect x="480.20" y="291.10" width="9.70" height="0.62" fill="#ece8f2"></rect>
<rect x="480.20" y="291.71" width="9.70" height="0.69" fill="#c9c3d9"></rect>
<rect x="491.10" y="290.00" width="9.70" height="1.50" fill="#1f7ae4"></rect>
<rect x="491.10" y="291.50" width="9.70" height="0.10" fill="#ebe7f3"></rect>
<rect x="491.10" y="291.60" width="9.70" height="0.06" fill="#c7c1da"></rect>
<rect x="491.10" y="291.66" width="9.70" height="0.12" fill="#f3ebd3"></rect>
<rect x="491.10" y="291.78" width="9.70" height="0.11" fill="#f8f5e4"></rect>
<rect x="491.10" y="291.89" width="9.70" height="0.14" fill="#dce4ee"></rect>
<rect x="491.10" y="292.03" width="9.70" height="0.13" fill="#c3d2e0"></rect>
<rect x="491.10" y="292.16" width="9.70" height="0.11" fill="#ece8f2"></rect>
<rect x="491.10" y="292.27" width="9.70" height="0.13" fill="#c9c3d9"></rect>
<rect x="502.00" y="288.70" width="9.70" height="1.80" fill="#1f7ae4"></rect>
<rect x="502.00" y="290.50" width="9.70" height="0.21" fill="#ebe7f3"></rect>
<rect x="502.00" y="290.71" width="9.70" height="0.13" fill="#c7c1da"></rect>
<rect x="502.00" y="290.84" width="9.70" height="0.25" fill="#f3ebd3"></rect>
<rect x="502.00" y="291.09" width="9.70" height="0.24" fill="#f8f5e4"></rect>
<rect x="502.00" y="291.33" width="9.70" height="0.30" fill="#dce4ee"></rect>
<rect x="502.00" y="291.63" width="9.70" height="0.27" fill="#c3d2e0"></rect>
<rect x="502.00" y="291.89" width="9.70" height="0.24" fill="#ece8f2"></rect>
<rect x="502.00" y="292.13" width="9.70" height="0.27" fill="#c9c3d9"></rect>
<rect x="512.90" y="282.70" width="9.70" height="0.50" fill="#dce3ee"></rect>
<rect x="512.90" y="283.20" width="9.70" height="1.80" fill="#1f7ae4"></rect>
<rect x="512.90" y="285.00" width="9.70" height="0.81" fill="#ebe7f3"></rect>
<rect x="512.90" y="285.81" width="9.70" height="0.52" fill="#c7c1da"></rect>
<rect x="512.90" y="286.32" width="9.70" height="0.99" fill="#f3ebd3"></rect>
<rect x="512.90" y="287.32" width="9.70" height="0.93" fill="#f8f5e4"></rect>
<rect x="512.90" y="288.24" width="9.70" height="1.15" fill="#dce4ee"></rect>
<rect x="512.90" y="289.40" width="9.70" height="1.04" fill="#c3d2e0"></rect>
<rect x="512.90" y="290.43" width="9.70" height="0.93" fill="#ece8f2"></rect>
<rect x="512.90" y="291.36" width="9.70" height="1.04" fill="#c9c3d9"></rect>
<rect x="523.80" y="283.10" width="9.70" height="0.40" fill="#dce3ee"></rect>
<rect x="523.80" y="283.50" width="9.70" height="2.00" fill="#1f7ae4"></rect>
<rect x="523.80" y="285.50" width="9.70" height="0.75" fill="#ebe7f3"></rect>
<rect x="523.80" y="286.25" width="9.70" height="0.48" fill="#c7c1da"></rect>
<rect x="523.80" y="286.74" width="9.70" height="0.92" fill="#f3ebd3"></rect>
<rect x="523.80" y="287.66" width="9.70" height="0.86" fill="#f8f5e4"></rect>
<rect x="523.80" y="288.52" width="9.70" height="1.08" fill="#dce4ee"></rect>
<rect x="523.80" y="289.60" width="9.70" height="0.97" fill="#c3d2e0"></rect>
<rect x="523.80" y="290.56" width="9.70" height="0.87" fill="#ece8f2"></rect>
<rect x="523.80" y="291.43" width="9.70" height="0.97" fill="#c9c3d9"></rect>
<rect x="534.70" y="287.80" width="9.70" height="1.70" fill="#1f7ae4"></rect>
<rect x="534.70" y="289.50" width="9.70" height="0.32" fill="#ebe7f3"></rect>
<rect x="534.70" y="289.82" width="9.70" height="0.20" fill="#c7c1da"></rect>
<rect x="534.70" y="290.02" width="9.70" height="0.39" fill="#f3ebd3"></rect>
<rect x="534.70" y="290.41" width="9.70" height="0.36" fill="#f8f5e4"></rect>
<rect x="534.70" y="290.77" width="9.70" height="0.45" fill="#dce4ee"></rect>
<rect x="534.70" y="291.22" width="9.70" height="0.41" fill="#c3d2e0"></rect>
<rect x="534.70" y="291.63" width="9.70" height="0.37" fill="#ece8f2"></rect>
<rect x="534.70" y="291.99" width="9.70" height="0.41" fill="#c9c3d9"></rect>
<rect x="545.60" y="285.40" width="9.70" height="0.10" fill="#dce3ee"></rect>
<rect x="545.60" y="285.50" width="9.70" height="1.50" fill="#1f7ae4"></rect>
<rect x="545.60" y="287.00" width="9.70" height="0.59" fill="#ebe7f3"></rect>
<rect x="545.60" y="287.59" width="9.70" height="0.38" fill="#c7c1da"></rect>
<rect x="545.60" y="287.97" width="9.70" height="0.72" fill="#f3ebd3"></rect>
<rect x="545.60" y="288.69" width="9.70" height="0.68" fill="#f8f5e4"></rect>
<rect x="545.60" y="289.37" width="9.70" height="0.84" fill="#dce4ee"></rect>
<rect x="545.60" y="290.21" width="9.70" height="0.76" fill="#c3d2e0"></rect>
<rect x="545.60" y="290.96" width="9.70" height="0.68" fill="#ece8f2"></rect>
<rect x="545.60" y="291.64" width="9.70" height="0.76" fill="#c9c3d9"></rect>
<rect x="556.50" y="285.00" width="9.70" height="2.00" fill="#1f7ae4"></rect>
<rect x="556.50" y="287.00" width="9.70" height="0.59" fill="#ebe7f3"></rect>
<rect x="556.50" y="287.59" width="9.70" height="0.38" fill="#c7c1da"></rect>
<rect x="556.50" y="287.97" width="9.70" height="0.72" fill="#f3ebd3"></rect>
<rect x="556.50" y="288.69" width="9.70" height="0.68" fill="#f8f5e4"></rect>
<rect x="556.50" y="289.37" width="9.70" height="0.84" fill="#dce4ee"></rect>
<rect x="556.50" y="290.21" width="9.70" height="0.76" fill="#c3d2e0"></rect>
<rect x="556.50" y="290.96" width="9.70" height="0.68" fill="#ece8f2"></rect>
<rect x="556.50" y="291.64" width="9.70" height="0.76" fill="#c9c3d9"></rect>
<rect x="567.40" y="283.80" width="9.70" height="0.20" fill="#dce3ee"></rect>
<rect x="567.40" y="284.00" width="9.70" height="2.00" fill="#1f7ae4"></rect>
<rect x="567.40" y="286.00" width="9.70" height="0.70" fill="#ebe7f3"></rect>
<rect x="567.40" y="286.70" width="9.70" height="0.45" fill="#c7c1da"></rect>
<rect x="567.40" y="287.15" width="9.70" height="0.86" fill="#f3ebd3"></rect>
<rect x="567.40" y="288.00" width="9.70" height="0.80" fill="#f8f5e4"></rect>
<rect x="567.40" y="288.80" width="9.70" height="1.00" fill="#dce4ee"></rect>
<rect x="567.40" y="289.80" width="9.70" height="0.90" fill="#c3d2e0"></rect>
<rect x="567.40" y="290.70" width="9.70" height="0.81" fill="#ece8f2"></rect>
<rect x="567.40" y="291.50" width="9.70" height="0.90" fill="#c9c3d9"></rect>
<rect x="578.30" y="277.50" width="9.70" height="0.50" fill="#dce3ee"></rect>
<rect x="578.30" y="278.00" width="9.70" height="2.50" fill="#1f7ae4"></rect>
<rect x="578.30" y="280.50" width="9.70" height="1.30" fill="#ebe7f3"></rect>
<rect x="578.30" y="281.80" width="9.70" height="0.83" fill="#c7c1da"></rect>
<rect x="578.30" y="282.63" width="9.70" height="1.59" fill="#f3ebd3"></rect>
<rect x="578.30" y="284.22" width="9.70" height="1.49" fill="#f8f5e4"></rect>
<rect x="578.30" y="285.71" width="9.70" height="1.86" fill="#dce4ee"></rect>
<rect x="578.30" y="287.57" width="9.70" height="1.67" fill="#c3d2e0"></rect>
<rect x="578.30" y="289.23" width="9.70" height="1.50" fill="#ece8f2"></rect>
<rect x="578.30" y="290.73" width="9.70" height="1.67" fill="#c9c3d9"></rect>
<rect x="589.20" y="287.80" width="9.70" height="0.20" fill="#dce3ee"></rect>
<rect x="589.20" y="288.00" width="9.70" height="2.00" fill="#1f7ae4"></rect>
<rect x="589.20" y="290.00" width="9.70" height="0.26" fill="#ebe7f3"></rect>
<rect x="589.20" y="290.26" width="9.70" height="0.17" fill="#c7c1da"></rect>
<rect x="589.20" y="290.43" width="9.70" height="0.32" fill="#f3ebd3"></rect>
<rect x="589.20" y="290.75" width="9.70" height="0.30" fill="#f8f5e4"></rect>
<rect x="589.20" y="291.05" width="9.70" height="0.37" fill="#dce4ee"></rect>
<rect x="589.20" y="291.43" width="9.70" height="0.34" fill="#c3d2e0"></rect>
<rect x="589.20" y="291.76" width="9.70" height="0.30" fill="#ece8f2"></rect>
<rect x="589.20" y="292.06" width="9.70" height="0.34" fill="#c9c3d9"></rect>
<rect x="600.10" y="289.90" width="9.70" height="0.10" fill="#dce3ee"></rect>
<rect x="600.10" y="290.00" width="9.70" height="1.50" fill="#1f7ae4"></rect>
<rect x="600.10" y="291.50" width="9.70" height="0.10" fill="#ebe7f3"></rect>
<rect x="600.10" y="291.60" width="9.70" height="0.06" fill="#c7c1da"></rect>
<rect x="600.10" y="291.66" width="9.70" height="0.12" fill="#f3ebd3"></rect>
<rect x="600.10" y="291.78" width="9.70" height="0.11" fill="#f8f5e4"></rect>
<rect x="600.10" y="291.89" width="9.70" height="0.14" fill="#dce4ee"></rect>
<rect x="600.10" y="292.03" width="9.70" height="0.13" fill="#c3d2e0"></rect>
<rect x="600.10" y="292.16" width="9.70" height="0.11" fill="#ece8f2"></rect>
<rect x="600.10" y="292.27" width="9.70" height="0.13" fill="#c9c3d9"></rect>
<rect x="611.00" y="277.00" width="9.70" height="0.50" fill="#dce3ee"></rect>
<rect x="611.00" y="277.50" width="9.70" height="2.00" fill="#1f7ae4"></rect>
<rect x="611.00" y="279.50" width="9.70" height="1.41" fill="#ebe7f3"></rect>
<rect x="611.00" y="280.91" width="9.70" height="0.90" fill="#c7c1da"></rect>
<rect x="611.00" y="281.81" width="9.70" height="1.73" fill="#f3ebd3"></rect>
<rect x="611.00" y="283.54" width="9.70" height="1.61" fill="#f8f5e4"></rect>
<rect x="611.00" y="285.15" width="9.70" height="2.01" fill="#dce4ee"></rect>
<rect x="611.00" y="287.16" width="9.70" height="1.81" fill="#c3d2e0"></rect>
<rect x="611.00" y="288.97" width="9.70" height="1.63" fill="#ece8f2"></rect>
<rect x="611.00" y="290.59" width="9.70" height="1.81" fill="#c9c3d9"></rect>
<rect x="621.90" y="283.10" width="9.70" height="0.40" fill="#dce3ee"></rect>
<rect x="621.90" y="283.50" width="9.70" height="1.50" fill="#1f7ae4"></rect>
<rect x="621.90" y="285.00" width="9.70" height="0.81" fill="#ebe7f3"></rect>
<rect x="621.90" y="285.81" width="9.70" height="0.52" fill="#c7c1da"></rect>
<rect x="621.90" y="286.32" width="9.70" height="0.99" fill="#f3ebd3"></rect>
<rect x="621.90" y="287.32" width="9.70" height="0.93" fill="#f8f5e4"></rect>
<rect x="621.90" y="288.24" width="9.70" height="1.15" fill="#dce4ee"></rect>
<rect x="621.90" y="289.40" width="9.70" height="1.04" fill="#c3d2e0"></rect>
<rect x="621.90" y="290.43" width="9.70" height="0.93" fill="#ece8f2"></rect>
<rect x="621.90" y="291.36" width="9.70" height="1.04" fill="#c9c3d9"></rect>
<rect x="632.80" y="289.90" width="9.70" height="0.10" fill="#dce3ee"></rect>
<rect x="632.80" y="290.00" width="9.70" height="1.50" fill="#1f7ae4"></rect>
<rect x="632.80" y="291.50" width="9.70" height="0.10" fill="#ebe7f3"></rect>
<rect x="632.80" y="291.60" width="9.70" height="0.06" fill="#c7c1da"></rect>
<rect x="632.80" y="291.66" width="9.70" height="0.12" fill="#f3ebd3"></rect>
<rect x="632.80" y="291.78" width="9.70" height="0.11" fill="#f8f5e4"></rect>
<rect x="632.80" y="291.89" width="9.70" height="0.14" fill="#dce4ee"></rect>
<rect x="632.80" y="292.03" width="9.70" height="0.13" fill="#c3d2e0"></rect>
<rect x="632.80" y="292.16" width="9.70" height="0.11" fill="#ece8f2"></rect>
<rect x="632.80" y="292.27" width="9.70" height="0.13" fill="#c9c3d9"></rect>
<rect x="643.70" y="286.00" width="9.70" height="2.00" fill="#1f7ae4"></rect>
<rect x="643.70" y="288.00" width="9.70" height="0.48" fill="#ebe7f3"></rect>
<rect x="643.70" y="288.48" width="9.70" height="0.31" fill="#c7c1da"></rect>
<rect x="643.70" y="288.79" width="9.70" height="0.59" fill="#f3ebd3"></rect>
<rect x="643.70" y="289.38" width="9.70" height="0.55" fill="#f8f5e4"></rect>
<rect x="643.70" y="289.93" width="9.70" height="0.69" fill="#dce4ee"></rect>
<rect x="643.70" y="290.61" width="9.70" height="0.62" fill="#c3d2e0"></rect>
<rect x="643.70" y="291.23" width="9.70" height="0.55" fill="#ece8f2"></rect>
<rect x="643.70" y="291.78" width="9.70" height="0.62" fill="#c9c3d9"></rect>
<rect x="654.60" y="283.80" width="9.70" height="0.20" fill="#dce3ee"></rect>
<rect x="654.60" y="284.00" width="9.70" height="2.00" fill="#1f7ae4"></rect>
<rect x="654.60" y="286.00" width="9.70" height="0.70" fill="#ebe7f3"></rect>
<rect x="654.60" y="286.70" width="9.70" height="0.45" fill="#c7c1da"></rect>
<rect x="654.60" y="287.15" width="9.70" height="0.86" fill="#f3ebd3"></rect>
<rect x="654.60" y="288.00" width="9.70" height="0.80" fill="#f8f5e4"></rect>
<rect x="654.60" y="288.80" width="9.70" height="1.00" fill="#dce4ee"></rect>
<rect x="654.60" y="289.80" width="9.70" height="0.90" fill="#c3d2e0"></rect>
<rect x="654.60" y="290.70" width="9.70" height="0.81" fill="#ece8f2"></rect>
<rect x="654.60" y="291.50" width="9.70" height="0.90" fill="#c9c3d9"></rect>
<rect x="665.50" y="280.00" width="9.70" height="0.50" fill="#dce3ee"></rect>
<rect x="665.50" y="280.50" width="9.70" height="2.00" fill="#1f7ae4"></rect>
<rect x="665.50" y="282.50" width="9.70" height="1.08" fill="#ebe7f3"></rect>
<rect x="665.50" y="283.58" width="9.70" height="0.69" fill="#c7c1da"></rect>
<rect x="665.50" y="284.27" width="9.70" height="1.33" fill="#f3ebd3"></rect>
<rect x="665.50" y="285.60" width="9.70" height="1.24" fill="#f8f5e4"></rect>
<rect x="665.50" y="286.84" width="9.70" height="1.54" fill="#dce4ee"></rect>
<rect x="665.50" y="288.38" width="9.70" height="1.39" fill="#c3d2e0"></rect>
<rect x="665.50" y="289.77" width="9.70" height="1.25" fill="#ece8f2"></rect>
<rect x="665.50" y="291.01" width="9.70" height="1.39" fill="#c9c3d9"></rect>
<rect x="676.40" y="281.10" width="9.70" height="0.40" fill="#dce3ee"></rect>
<rect x="676.40" y="281.50" width="9.70" height="2.50" fill="#1f7ae4"></rect>
<rect x="676.40" y="284.00" width="9.70" height="0.92" fill="#ebe7f3"></rect>
<rect x="676.40" y="284.92" width="9.70" height="0.59" fill="#c7c1da"></rect>
<rect x="676.40" y="285.50" width="9.70" height="1.13" fill="#f3ebd3"></rect>
<rect x="676.40" y="286.63" width="9.70" height="1.05" fill="#f8f5e4"></rect>
<rect x="676.40" y="287.68" width="9.70" height="1.31" fill="#dce4ee"></rect>
<rect x="676.40" y="288.99" width="9.70" height="1.18" fill="#c3d2e0"></rect>
<rect x="676.40" y="290.17" width="9.70" height="1.06" fill="#ece8f2"></rect>
<rect x="676.40" y="291.22" width="9.70" height="1.18" fill="#c9c3d9"></rect>
<rect x="349.40" y="184.70" width="9.70" height="56.40" fill="#e1e4ee"></rect>
<rect x="349.40" y="241.10" width="9.70" height="6.80" fill="#f0089a"></rect>
<rect x="349.40" y="247.90" width="9.70" height="4.85" fill="#ebe7f3"></rect>
<rect x="349.40" y="252.75" width="9.70" height="3.12" fill="#c7c1da"></rect>
<rect x="349.40" y="255.87" width="9.70" height="5.96" fill="#f3ebd3"></rect>
<rect x="349.40" y="261.83" width="9.70" height="5.56" fill="#f8f5e4"></rect>
<rect x="349.40" y="267.39" width="9.70" height="6.94" fill="#dce4ee"></rect>
<rect x="349.40" y="274.33" width="9.70" height="6.23" fill="#c3d2e0"></rect>
<rect x="349.40" y="280.56" width="9.70" height="5.61" fill="#ece8f2"></rect>
<rect x="349.40" y="286.17" width="9.70" height="6.23" fill="#c9c3d9"></rect>
<rect x="38.0" y="292" width="653.5" height="1" fill="#9ea2ac"></rect>
<rect x="54.70" y="293" width="0.8" height="2" fill="#9ea2ac"></rect>
<rect x="109.20" y="293" width="0.8" height="2" fill="#9ea2ac"></rect>
<rect x="163.70" y="293" width="0.8" height="2" fill="#9ea2ac"></rect>
<rect x="218.20" y="293" width="0.8" height="2" fill="#9ea2ac"></rect>
<rect x="272.70" y="293" width="0.8" height="2" fill="#9ea2ac"></rect>
<rect x="327.20" y="293" width="0.8" height="2" fill="#9ea2ac"></rect>
<rect x="381.70" y="293" width="0.8" height="2" fill="#9ea2ac"></rect>
<rect x="436.20" y="293" width="0.8" height="2" fill="#9ea2ac"></rect>
<rect x="490.70" y="293" width="0.8" height="2" fill="#9ea2ac"></rect>
<rect x="545.20" y="293" width="0.8" height="2" fill="#9ea2ac"></rect>
<rect x="599.70" y="293" width="0.8" height="2" fill="#9ea2ac"></rect>
<rect x="654.20" y="293" width="0.8" height="2" fill="#9ea2ac"></rect>
<path d="M360.3 233.5L354 245" stroke="#2c3140" stroke-width="0.7"></path>
</svg>
<div class="ax" style="right:673.7px;top:289.60px;line-height:7px;font-size:5.3px">0</div>
<div class="ax" style="right:673.7px;top:276.49px;line-height:7px;font-size:5.3px">64</div>
<div class="ax" style="right:673.7px;top:263.38px;line-height:7px;font-size:5.3px">128</div>
<div class="ax" style="right:673.7px;top:250.27px;line-height:7px;font-size:5.3px">192</div>
<div class="ax" style="right:673.7px;top:237.16px;line-height:7px;font-size:5.3px">256</div>
<div class="ax" style="right:673.7px;top:224.05px;line-height:7px;font-size:5.3px">320</div>
<div class="ax" style="right:673.7px;top:210.94px;line-height:7px;font-size:5.3px">384</div>
<div class="ax" style="right:673.7px;top:197.83px;line-height:7px;font-size:5.3px">448</div>
<div class="ax" style="right:673.7px;top:184.72px;line-height:7px;font-size:5.3px">512</div>
<div class="ax" style="left:8px;top:240px;line-height:7px;transform:rotate(-90deg);transform-origin:center;width:24px;color:#9a9ea8;font-size:5px">Mebibytes</div>
<div class="ax" style="left: 48.9px; top: 295.2px; line-height: 7px; font-size: 5.4px; transform: scaleX(0.9185); transform-origin: 0px 50%;">13:45</div>
<div class="ax" style="left: 103.4px; top: 295.2px; line-height: 7px; font-size: 5.4px; transform: scaleX(0.9185); transform-origin: 0px 50%;">13:50</div>
<div class="ax" style="left: 157.9px; top: 295.2px; line-height: 7px; font-size: 5.4px; transform: scaleX(0.9185); transform-origin: 0px 50%;">13:55</div>
<div class="ax" style="left: 212.4px; top: 295.2px; line-height: 7px; font-size: 5.4px; transform: scaleX(0.9185); transform-origin: 0px 50%;">14:00</div>
<div class="ax" style="left: 266.9px; top: 295.2px; line-height: 7px; font-size: 5.4px; transform: scaleX(0.9185); transform-origin: 0px 50%;">14:05</div>
<div class="ax" style="left: 321.4px; top: 295.2px; line-height: 7px; font-size: 5.4px; transform: scaleX(0.9185); transform-origin: 0px 50%;">14:10</div>
<div class="ax" style="left: 375.9px; top: 295.2px; line-height: 7px; font-size: 5.4px; transform: scaleX(0.9185); transform-origin: 0px 50%;">14:15</div>
<div class="ax" style="left: 430.4px; top: 295.2px; line-height: 7px; font-size: 5.4px; transform: scaleX(0.9185); transform-origin: 0px 50%;">14:20</div>
<div class="ax" style="left: 484.9px; top: 295.2px; line-height: 7px; font-size: 5.4px; transform: scaleX(0.9185); transform-origin: 0px 50%;">14:25</div>
<div class="ax" style="left: 539.4px; top: 295.2px; line-height: 7px; font-size: 5.4px; transform: scaleX(0.9185); transform-origin: 0px 50%;">14:30</div>
<div class="ax" style="left: 593.9px; top: 295.2px; line-height: 7px; font-size: 5.4px; transform: scaleX(0.9185); transform-origin: 0px 50%;">14:35</div>
<div class="ax" style="left: 648.4px; top: 295.2px; line-height: 7px; font-size: 5.4px; transform: scaleX(0.9185); transform-origin: 0px 50%;">14:40</div>
<div class="a" style="left:360px;top:211.6px;width:184.5px;height:11px;background:#3d95ea"></div>
<div class="a" style="left: 363.2px; top: 213.8px; font-size: 6.3px; line-height: 8px; color: rgb(255, 255, 255); transform: scaleX(0.95); transform-origin: 0px 50%;">namespace:nyc, exporter_ip:10.100.70.137, source_ip:10.1.122.19</div>
<div class="a" style="left:360px;top:222.5px;width:33px;height:11px;background:#2f3340"></div>
<div class="a b" style="left: 363.2px; top: 224.6px; font-size: 6.3px; line-height: 8px; color: rgb(255, 255, 255); transform: scaleX(0.9394); transform-origin: 0px 50%;">30.51 MiB</div>
<div class="a" style="left:334.5px;top:295.2px;width:12.5px;height:8.2px;background:#4d5262"></div>
<div class="a" style="left:347px;top:295.2px;width:26.8px;height:8.2px;background:#30343f"></div>
<div class="a" style="left:351.5px;top:293px;width:0;height:0;border-left:2.5px solid transparent;border-right:2.5px solid transparent;border-bottom:2.2px solid #30343f"></div>
<div class="a" style="left: 337px; top: 295.5px; font-size: 6.2px; line-height: 8px; color: rgb(255, 255, 255); transform: scaleX(0.906); transform-origin: 0px 50%;">1m</div>
<div class="a" style="left: 349px; top: 295.5px; font-size: 6.2px; line-height: 8px; color: rgb(255, 255, 255); letter-spacing: -0.085px;">14:12:00</div>

<div class="a" style="left:32.6px;top:309.3px;width:5.2px;height:5.2px;border-radius:1px;background:#8ec3f2"></div>
<div class="a" style="left: 40.7px; top: 308px; font-size: 6.4px; line-height: 8px; color: rgb(47, 52, 65); transform: scaleX(0.8633); transform-origin: 0px 50%;">namespace:nyc, exporter_ip:10.100.70.134, source_ip:10.1.122.19</div>
<div class="a" style="left:212.3px;top:309.3px;width:5.2px;height:5.2px;border-radius:1px;background:#1f8af0"></div>
<div class="a" style="left: 221px; top: 308px; font-size: 6.4px; line-height: 8px; color: rgb(47, 52, 65); transform: scaleX(0.8528); transform-origin: 0px 50%;">namespace:nyc, exporter_ip:10.100.70.137, source_ip:10.1.122.19</div>
<div class="a" style="left:391.9px;top:309.3px;width:5.2px;height:5.2px;border-radius:1px;background:#d6c8f5"></div>
<div class="a" style="left: 400px; top: 308px; font-size: 6.4px; line-height: 8px; color: rgb(47, 52, 65); transform: scaleX(0.8623); transform-origin: 0px 50%;">namespace:nyc, exporter_ip:10.100.70.140, source_ip:10.1.122.19</div>
<div class="a" style="left:668.4px;top:306.8px;width:12.2px;height:9.5px;border:1px solid #d8dbe8;border-radius:2px"></div>
<div class="a" style="left:670.8px;top:308.5px;font-size:5.6px;line-height:7px;color:#3b404d">+7</div>

<!-- facets -->
<div class="a" style="left:7.2px;top:330.5px;width:110.3px;height:14px;border:1px solid #dcdfea;border-radius:2px"></div>
<svg class="a" style="left:12px;top:334px" width="8" height="8"><circle cx="3.3" cy="3.3" r="2.5" fill="none" stroke="#6a6f7c" stroke-width="0.8"></circle><path d="M5.1 5.1L7.2 7.2" stroke="#6a6f7c" stroke-width="0.8"></path></svg>
<div class="a" style="left: 23.5px; top: 333.2px; font-size: 6.6px; line-height: 9px; color: rgb(141, 145, 156); letter-spacing: -0.102px;">Search facets</div>
<div class="a" style="left:7.5px;top:348.2px;width:110px;height:11.8px;background:#e4e7ee;border-radius:2px"></div>
<svg class="a" style="left:13px;top:352.2px" width="6" height="4"><path d="M0.8 0.7L3 2.9L5.2 0.7" fill="none" stroke="#5d6270" stroke-width="1"></path></svg>
<div class="a" style="left: 21.3px; top: 350.6px; font-size: 5.8px; line-height: 7px; color: rgb(106, 111, 123); transform: scaleX(0.8151); transform-origin: 0px 50%;">DEVICE</div>
<svg class="chev" style="top:368.0px" width="4" height="6"><path d="M0.8 0.6L3.2 3L0.8 5.4" fill="none" stroke="#5d6270" stroke-width="0.8"></path></svg><div class="fac" style="top: 366.5px; transform: scaleX(0.9479); transform-origin: 0px 50%;">Device IP</div>
<div class="hl" style="left:7.5px;top:379px;width:110px;background:#eceef3"></div>
<svg class="chev" style="top:386.0px" width="4" height="6"><path d="M0.8 0.6L3.2 3L0.8 5.4" fill="none" stroke="#5d6270" stroke-width="0.8"></path></svg><div class="fac" style="top: 384.5px; letter-spacing: -0.087px;">Device Model</div>
<div class="hl" style="left:7.5px;top:397px;width:110px;background:#eceef3"></div>
<svg class="chev" style="top:404.0px" width="4" height="6"><path d="M0.8 0.6L3.2 3L0.8 5.4" fill="none" stroke="#5d6270" stroke-width="0.8"></path></svg><div class="fac" style="top: 402.5px; letter-spacing: -0.076px;">Device Name</div>
<div class="hl" style="left:7.5px;top:415px;width:110px;background:#eceef3"></div>
<svg class="chev" style="top:422.0px" width="4" height="6"><path d="M0.8 0.6L3.2 3L0.8 5.4" fill="none" stroke="#5d6270" stroke-width="0.8"></path></svg><div class="fac" style="top: 420.5px; letter-spacing: -0.137px;">Device Namespace</div>
<div class="hl" style="left:7.5px;top:433px;width:110px;background:#eceef3"></div>
<svg class="chev" style="top:440.0px" width="4" height="6"><path d="M0.8 0.6L3.2 3L0.8 5.4" fill="none" stroke="#5d6270" stroke-width="0.8"></path></svg><div class="fac" style="top: 438.5px; letter-spacing: -0.129px;">Device Vendor</div>
<div class="hl" style="left:7.5px;top:451px;width:110px;background:#eceef3"></div>
<svg class="chev" style="top:458.0px" width="4" height="6"><path d="M0.8 0.6L3.2 3L0.8 5.4" fill="none" stroke="#5d6270" stroke-width="0.8"></path></svg><div class="fac" style="top:456.5px">Exporter IP</div>
<!-- table controls -->
<svg class="a" style="left:134.5px;top:338px" width="8" height="8"><rect x="0.5" y="0.5" width="6.5" height="6.5" rx="1" fill="none" stroke="#3d82d8" stroke-width="0.8"></rect><path d="M4.6 2.2L3.1 3.75L4.6 5.3" fill="none" stroke="#3d82d8" stroke-width="0.8"></path></svg>
<div class="a" style="left: 144.7px; top: 337px; font-size: 6.6px; line-height: 9px; color: rgb(43, 120, 214); text-shadow: rgb(43, 120, 214) 0.15px 0px 0px; letter-spacing: 0.037px;">Hide Controls</div>
<div class="a" style="left: 191px; top: 336.6px; font-size: 6.6px; line-height: 9px; color: rgb(44, 49, 64); letter-spacing: 0.069px;">Showing <b>1–50</b> of <b>100</b> aggregated flows from <b>70</b> devices emitting netflow</div>
<svg class="a" style="left:655.2px;top:337.7px" width="8" height="8"><polygon points="7.13,3.14 6.25,4.29 6.63,5.69 5.19,5.88 4.46,7.13 3.31,6.25 1.91,6.63 1.72,5.19 0.47,4.46 1.35,3.31 0.97,1.91 2.41,1.72 3.14,0.47 4.29,1.35 5.69,0.97 5.88,2.41" fill="#555b68"></polygon><circle cx="3.8" cy="3.8" r="1.1" fill="#fff"></circle></svg>
<div class="a" style="left: 666px; top: 337px; font-size: 6.4px; line-height: 9px; color: rgb(85, 91, 104); letter-spacing: 0.127px;">Customize</div>
<!-- table -->
<div class="a" style="left:129px;top:351.8px;width:573.8px;height:120px;border:1px solid #e6e8ee"></div>
<div class="hl" style="left:129.5px;top:364.9px;width:573px;background:#eceef3"></div>
<div class="hl" style="left:129.5px;top:379px;width:573px;background:#e6e8ee"></div>
<div class="hl" style="left:129.5px;top:400.3px;width:573px;background:#eceef3"></div>
<div class="hl" style="left:129.5px;top:421.3px;width:573px;background:#eceef3"></div>
<div class="hl" style="left:129.5px;top:442.2px;width:573px;background:#eceef3"></div>
<div class="vl" style="left:238px;top:352.5px;height:120px;background:#eceef3"></div>
<div class="vl" style="left:476.5px;top:352.5px;height:120px;background:#eceef3"></div>
<div class="a" style="left:129.5px;width:109px;top:355px;text-align:center;font-size:6.4px;line-height:9px;color:#6a6f7c"><span style="transform: scaleX(0.885); transform-origin: 0px 50%;">SOURCE</span></div>
<div class="a" style="left:238px;width:238px;top:355px;text-align:center;font-size:6.4px;line-height:9px;color:#6a6f7c"><span style="transform: scaleX(0.9161); transform-origin: 0px 50%;">DEVICE</span></div>
<div class="a" style="left:476.5px;width:226px;top:355px;text-align:center;font-size:6.4px;line-height:9px;color:#6a6f7c"><span style="letter-spacing: -0.2px;">VOLUME</span></div>
<div class="a b" style="left:133px;top:368.5px;font-size:6px;line-height:8px;color:#2c3140">IP</div>
<div class="a b" style="left: 241.6px; top: 368.5px; font-size: 6px; line-height: 8px; color: rgb(44, 49, 64); transform: scaleX(0.9072); transform-origin: 0px 50%;">EXPORTER IP</div>
<div class="a" style="left:283px;top:369px;width:6.5px;height:6.5px;border-radius:50%;background:#1a62c6;color:#fff;font-size:5px;line-height:6.5px;text-align:center;font-weight:bold">?</div>
<div class="a b" style="left: 360.6px; top: 368.5px; font-size: 6px; line-height: 8px; color: rgb(44, 49, 64); transform: scaleX(0.9398); transform-origin: 0px 50%;">DEVICE IP</div>
<svg class="a" style="left:480px;top:369px" width="6" height="7"><path d="M3 0.5V6M1 4L3 6L5 4" fill="none" stroke="#2c3140" stroke-width="0.8"></path></svg>
<div class="a b" style="left: 489.6px; top: 368.5px; font-size: 6px; line-height: 8px; color: rgb(44, 49, 64); transform: scaleX(0.9143); transform-origin: 0px 50%;">BITS</div>
<div class="a b" style="left: 592.7px; top: 368.5px; font-size: 6px; line-height: 8px; color: rgb(44, 49, 64); transform: scaleX(0.8854); transform-origin: 0px 50%;">PACKETS</div>
<div class="pill" style="left:133.4px;top:383.40px;width:55.2px"><svg width="8" height="8"><path d="M1 0.9H4.9L6.6 2.6V6.9H1Z" fill="none" stroke="#3d4250" stroke-width="0.9"></path><path d="M2.3 2.6H4.2M2.3 4.1H5.3M2.3 5.5H5.3" stroke="#3d4250" stroke-width="0.8"></path></svg><span style="letter-spacing: -0.094px;">10.1.122.19</span></div>
<div class="pill" style="left:241.3px;top:383.40px;width:63.3px"><svg width="8" height="8"><path d="M1 0.9H4.9L6.6 2.6V6.9H1Z" fill="none" stroke="#3d4250" stroke-width="0.9"></path><path d="M2.3 2.6H4.2M2.3 4.1H5.3M2.3 5.5H5.3" stroke="#3d4250" stroke-width="0.8"></path></svg><span style="letter-spacing: -0.081px;">10.100.70.145</span></div>
<div class="pill" style="left:360.6px;top:383.40px;width:63.1px"><svg width="8" height="8"><path d="M1 0.9H4.9L6.6 2.6V6.9H1Z" fill="none" stroke="#3d4250" stroke-width="0.9"></path><path d="M2.3 2.6H4.2M2.3 4.1H5.3M2.3 5.5H5.3" stroke="#3d4250" stroke-width="0.8"></path></svg><span style="letter-spacing: -0.081px;">10.100.70.145</span></div>
<div class="vol" style="left: 479.5px; top: 383.7px; letter-spacing: 0.212px;"><b>5.03</b> <em>Gb</em> | <b>1.40</b> <em>Mbps</em></div>
<div class="vol" style="left: 592.7px; top: 383.7px; letter-spacing: 0.259px;"><b>6.63</b> <em>Mp</em> | <b>1.84</b> <em>kpps</em></div>
<div class="pill" style="left:133.4px;top:404.50px;width:55.2px"><svg width="8" height="8"><path d="M1 0.9H4.9L6.6 2.6V6.9H1Z" fill="none" stroke="#3d4250" stroke-width="0.9"></path><path d="M2.3 2.6H4.2M2.3 4.1H5.3M2.3 5.5H5.3" stroke="#3d4250" stroke-width="0.8"></path></svg><span style="letter-spacing: -0.094px;">10.1.122.19</span></div>
<div class="pill" style="left:241.3px;top:404.50px;width:63.3px"><svg width="8" height="8"><path d="M1 0.9H4.9L6.6 2.6V6.9H1Z" fill="none" stroke="#3d4250" stroke-width="0.9"></path><path d="M2.3 2.6H4.2M2.3 4.1H5.3M2.3 5.5H5.3" stroke="#3d4250" stroke-width="0.8"></path></svg><span style="letter-spacing: -0.081px;">10.100.70.143</span></div>
<div class="pill" style="left:360.6px;top:404.50px;width:63.1px"><svg width="8" height="8"><path d="M1 0.9H4.9L6.6 2.6V6.9H1Z" fill="none" stroke="#3d4250" stroke-width="0.9"></path><path d="M2.3 2.6H4.2M2.3 4.1H5.3M2.3 5.5H5.3" stroke="#3d4250" stroke-width="0.8"></path></svg><span style="letter-spacing: -0.081px;">10.100.70.143</span></div>
<div class="vol" style="left: 479.5px; top: 404.8px; letter-spacing: 0.212px;"><b>5.02</b> <em>Gb</em> | <b>1.40</b> <em>Mbps</em></div>
<div class="vol" style="left: 592.7px; top: 404.8px; letter-spacing: 0.259px;"><b>6.64</b> <em>Mp</em> | <b>1.85</b> <em>kpps</em></div>
<div class="pill" style="left:133.4px;top:425.50px;width:55.2px"><svg width="8" height="8"><path d="M1 0.9H4.9L6.6 2.6V6.9H1Z" fill="none" stroke="#3d4250" stroke-width="0.9"></path><path d="M2.3 2.6H4.2M2.3 4.1H5.3M2.3 5.5H5.3" stroke="#3d4250" stroke-width="0.8"></path></svg><span style="letter-spacing: -0.094px;">10.1.122.19</span></div>
<div class="pill" style="left:241.3px;top:425.50px;width:63.3px"><svg width="8" height="8"><path d="M1 0.9H4.9L6.6 2.6V6.9H1Z" fill="none" stroke="#3d4250" stroke-width="0.9"></path><path d="M2.3 2.6H4.2M2.3 4.1H5.3M2.3 5.5H5.3" stroke="#3d4250" stroke-width="0.8"></path></svg><span style="letter-spacing: -0.081px;">10.100.70.167</span></div>
<div class="pill" style="left:360.6px;top:425.50px;width:63.1px"><svg width="8" height="8"><path d="M1 0.9H4.9L6.6 2.6V6.9H1Z" fill="none" stroke="#3d4250" stroke-width="0.9"></path><path d="M2.3 2.6H4.2M2.3 4.1H5.3M2.3 5.5H5.3" stroke="#3d4250" stroke-width="0.8"></path></svg><span style="letter-spacing: -0.081px;">10.100.70.167</span></div>
<div class="vol" style="left: 479.5px; top: 425.8px; letter-spacing: 0.212px;"><b>5.02</b> <em>Gb</em> | <b>1.40</b> <em>Mbps</em></div>
<div class="vol" style="left: 592.7px; top: 425.8px; letter-spacing: 0.259px;"><b>6.61</b> <em>Mp</em> | <b>1.84</b> <em>kpps</em></div>
<div class="pill" style="left:133.4px;top:446.40px;width:55.2px"><svg width="8" height="8"><path d="M1 0.9H4.9L6.6 2.6V6.9H1Z" fill="none" stroke="#3d4250" stroke-width="0.9"></path><path d="M2.3 2.6H4.2M2.3 4.1H5.3M2.3 5.5H5.3" stroke="#3d4250" stroke-width="0.8"></path></svg><span style="letter-spacing: -0.094px;">10.1.122.19</span></div>
<div class="pill" style="left:241.3px;top:446.40px;width:63.3px"><svg width="8" height="8"><path d="M1 0.9H4.9L6.6 2.6V6.9H1Z" fill="none" stroke="#3d4250" stroke-width="0.9"></path><path d="M2.3 2.6H4.2M2.3 4.1H5.3M2.3 5.5H5.3" stroke="#3d4250" stroke-width="0.8"></path></svg><span style="letter-spacing: -0.081px;">10.100.70.137</span></div>
<div class="pill" style="left:360.6px;top:446.40px;width:63.1px"><svg width="8" height="8"><path d="M1 0.9H4.9L6.6 2.6V6.9H1Z" fill="none" stroke="#3d4250" stroke-width="0.9"></path><path d="M2.3 2.6H4.2M2.3 4.1H5.3M2.3 5.5H5.3" stroke="#3d4250" stroke-width="0.8"></path></svg><span style="letter-spacing: -0.081px;">10.100.70.137</span></div>
<div class="vol" style="left: 479.5px; top: 446.7px; letter-spacing: 0.212px;"><b>5.02</b> <em>Gb</em> | <b>1.39</b> <em>Mbps</em></div>
<div class="vol" style="left: 592.7px; top: 446.7px; letter-spacing: 0.259px;"><b>6.63</b> <em>Mp</em> | <b>1.84</b> <em>kpps</em></div>

</body></html>
